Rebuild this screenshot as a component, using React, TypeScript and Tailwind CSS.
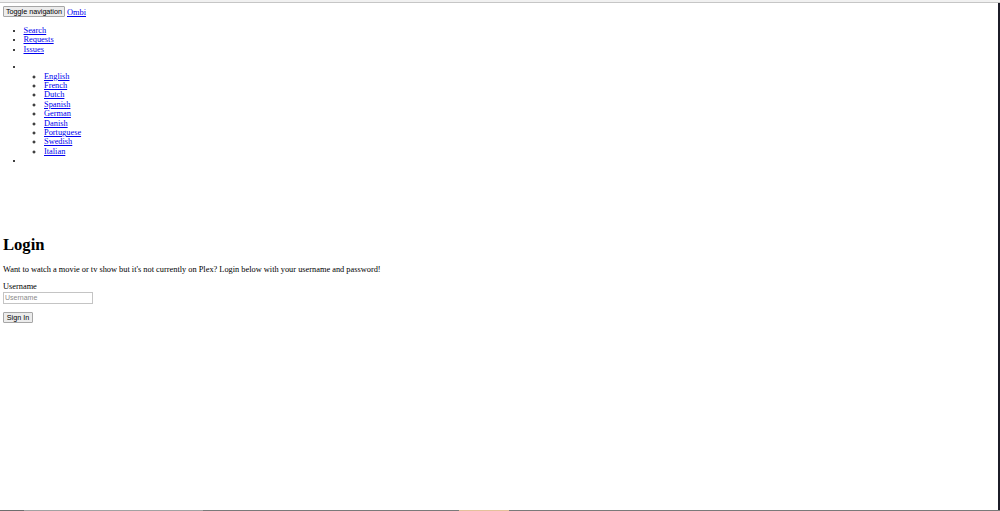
const navLinks = ['Search', 'Requests', 'Issues'];
const languages = ['English', 'French', 'Dutch', 'Spanish', 'German', 'Danish', 'Portuguese', 'Swedish', 'Italian'];

const Link = ({ children }: { children: React.ReactNode }) => (
  <a href="#" className="text-[#0000ee] underline">
    {children}
  </a>
);

export default function App() {
  return (
    <div className="flex h-[511px] w-[1000px] flex-col overflow-hidden bg-white">
      {/* window chrome strip */}
      <div className="h-[3px] border-b border-[#c6c6c6] bg-[#f1f1f1]" />

      <div className="flex flex-1">
        <div className="flex-1 px-[3px] pt-[3px] font-['Liberation_Serif',serif] text-[8.35px] leading-[9.4px] text-black">
          <div className="flex items-end gap-[2px]">
            <button className="h-[11px] w-[62px] rounded-[1px] border border-[#a6a6a6] bg-[#ececec] font-['Liberation_Sans',sans-serif] text-[7.2px] leading-[9px] text-black">
              Toggle navigation
            </button>
            <Link>Ombi</Link>
          </div>

          <ul className="mt-[9px] mb-[8px] list-disc pl-[20.5px]">
            {navLinks.map((l) => (
              <li key={l}>
                <Link>{l}</Link>
              </li>
            ))}
          </ul>

          <ul className="my-[8px] list-disc pl-[20.5px]">
            <li>
              &nbsp;
              <ul className="list-[circle] pl-[20.5px]">
                {languages.map((l) => (
                  <li key={l}>
                    <Link>{l}</Link>
                  </li>
                ))}
              </ul>
            </li>
            <li>&nbsp;</li>
          </ul>

          <h1 className="mt-[69px] mb-[11px] text-[16.6px] leading-[19px] font-bold">Login</h1>
          <p className="mb-[8px]">
            Want to watch a movie or tv show but it's not currently on Plex? Login below with your username and password!
          </p>
          <label className="block">Username</label>
          <input
            placeholder="Username"
            className="block h-[12px] w-[90px] border border-[#c4c4c4] px-[1px] font-['Liberation_Sans',sans-serif] text-[7px] placeholder:text-[#8a8a8a]"
          />
          <button className="mt-[8px] h-[11px] w-[30px] rounded-[1px] border border-[#a6a6a6] bg-[#ececec] font-['Liberation_Sans',sans-serif] text-[7.2px] leading-[9px] text-black">
            Sign In
          </button>
        </div>
        <div className="w-[2px] bg-[#1c1c28]" />
      </div>

      {/* bottom edge */}
      <div className="flex h-px">
        <div className="w-[24px] bg-[#6e6e6e]" />
        <div className="w-[179px] bg-[#a2a2a2]" />
        <div className="w-[256px] bg-[#7a7a7a]" />
        <div className="w-[50px] bg-[#e5c29b]" />
        <div className="flex-1 bg-[#7a7a7a]" />
      </div>
    </div>
  );
}
